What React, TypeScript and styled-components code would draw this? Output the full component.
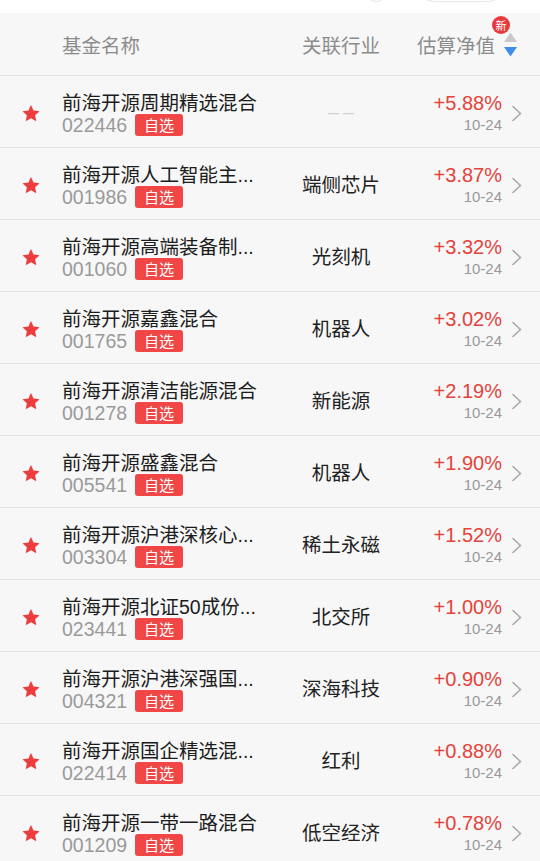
import React from "react";
import styled, { createGlobalStyle } from "styled-components";

const GlobalStyle = createGlobalStyle`
  html, body { margin: 0; padding: 0; }
  body {
    background: #f7f7f7;
    font-family: "Liberation Sans", "Noto Sans CJK SC", sans-serif;
    -webkit-font-smoothing: antialiased;
  }
`;

const Page = styled.div`
  width: 540px;
  min-height: 861px;
  background: #f7f7f7;
  overflow: hidden;
`;

const TopStrip = styled.div`
  height: 13px;
  background: #ffffff;
  overflow: hidden;
  display: flex;
  justify-content: flex-end;
  align-items: flex-end;
  padding-right: 33px;
`;

const GhostCircle = styled.div`
  width: 27px;
  height: 40px;
  border: 1px solid #e6e6e6;
  border-radius: 50%;
  margin-bottom: 11px;
  box-sizing: border-box;
`;

const GhostPill = styled.div`
  width: 92px;
  height: 40px;
  border: 1px solid #e6e6e6;
  border-radius: 20px;
  margin-left: 25px;
  margin-bottom: 11px;
  box-sizing: border-box;
`;

const columns = "62px 208px 142px 90px 38px";

const Header = styled.div`
  display: grid;
  grid-template-columns: ${columns};
  height: 62px;
  align-items: center;
  border-bottom: 1px solid #e6e6e6;
  color: #8c8c8c;
  font-size: 19.5px;
`;

const HeadName = styled.div`
  grid-column: 2;
  padding-top: 1px;
`;

const HeadIndustry = styled.div`
  grid-column: 3;
  text-align: center;
  padding-top: 1px;
`;

const HeadValue = styled.div`
  grid-column: 4 / span 2;
  position: relative;
  align-self: stretch;
  display: flex;
  justify-content: flex-end;
  align-items: center;
  padding-right: 23px;
  gap: 9px;
  padding-top: 1px;
`;

const NewBadge = styled.span`
  position: absolute;
  right: 30px;
  top: 3px;
  width: 18px;
  height: 18px;
  border-radius: 50%;
  background: #e8383d;
  color: #fff;
  font-size: 11px;
  line-height: 18px;
  text-align: center;
  font-family: "Noto Sans CJK SC", sans-serif;
`;

const SortIcon = styled.svg`
  width: 13px;
  height: 25px;
  display: block;
`;

const Row = styled.div`
  display: grid;
  grid-template-columns: ${columns};
  height: 71px;
  border-bottom: 1px solid #e6e6e6;
  align-items: center;
`;

const StarCell = styled.div`
  display: flex;
  justify-content: center;
  padding-top: 3px;
`;

const NameCell = styled.div`
  align-self: stretch;
  display: flex;
  flex-direction: column;
  padding-top: 15px;
  min-width: 0;
`;

const FundName = styled.div`
  font-size: 19.5px;
  line-height: 24px;
  color: #1c1c1c;
  white-space: nowrap;
`;

const CodeLine = styled.div`
  display: flex;
  align-items: center;
  gap: 8px;
  height: 22px;
  margin-top: -1px;
`;

const Code = styled.span`
  font-size: 19.5px;
  color: #9a9a9a;
  line-height: 22px;
`;

const Tag = styled.span`
  display: inline-block;
  height: 22px;
  line-height: 22px;
  padding: 0 9px;
  border-radius: 3px;
  background: #f04646;
  color: #ffffff;
  font-size: 15px;
  font-family: "Noto Sans CJK SC", sans-serif;
`;

const Industry = styled.div<{ $empty?: boolean }>`
  text-align: center;
  font-size: 19.5px;
  color: ${(p) => (p.$empty ? "#d0d0d0" : "#222222")};
  padding-top: ${(p) => (p.$empty ? "2px" : "0")};
  letter-spacing: ${(p) => (p.$empty ? "4px" : "0")};
  text-indent: ${(p) => (p.$empty ? "4px" : "0")};
`;

const ValueCell = styled.div`
  align-self: stretch;
  display: flex;
  flex-direction: column;
  align-items: flex-end;
  padding-top: 15px;
`;

const Change = styled.div`
  font-size: 20px;
  line-height: 24px;
  color: #e4433b;
`;

const DateText = styled.div`
  font-size: 15px;
  line-height: 18px;
  color: #999999;
  margin-top: 1px;
`;

const ChevronCell = styled.div`
  display: flex;
  padding-left: 9px;
  padding-top: 3px;
`;

const Star = () => (
  <svg width="20" height="19" viewBox="0 0 24 23" aria-hidden>
    <path
      d="M12 1.2l3.1 6.6 7.2.9-5.3 5 1.4 7.1L12 17.3l-6.4 3.5 1.4-7.1-5.3-5 7.2-.9z"
      fill="#f03c3c"
    />
  </svg>
);

const Chevron = () => (
  <svg width="12" height="17" viewBox="0 0 12 17" aria-hidden>
    <path d="M2 1.5l7.5 7-7.5 7" fill="none" stroke="#a8a8a8" strokeWidth="1.6" strokeLinecap="round" strokeLinejoin="round" />
  </svg>
);

type Fund = { name: string; code: string; industry: string; change: string };

const funds: Fund[] = [
  { name: "前海开源周期精选混合", code: "022446", industry: "", change: "+5.88%" },
  { name: "前海开源人工智能主...", code: "001986", industry: "端侧芯片", change: "+3.87%" },
  { name: "前海开源高端装备制...", code: "001060", industry: "光刻机", change: "+3.32%" },
  { name: "前海开源嘉鑫混合", code: "001765", industry: "机器人", change: "+3.02%" },
  { name: "前海开源清洁能源混合", code: "001278", industry: "新能源", change: "+2.19%" },
  { name: "前海开源盛鑫混合", code: "005541", industry: "机器人", change: "+1.90%" },
  { name: "前海开源沪港深核心...", code: "003304", industry: "稀土永磁", change: "+1.52%" },
  { name: "前海开源北证50成份...", code: "023441", industry: "北交所", change: "+1.00%" },
  { name: "前海开源沪港深强国...", code: "004321", industry: "深海科技", change: "+0.90%" },
  { name: "前海开源国企精选混...", code: "022414", industry: "红利", change: "+0.88%" },
  { name: "前海开源一带一路混合", code: "001209", industry: "低空经济", change: "+0.78%" },
];

export default function App() {
  return (
    <Page>
      <GlobalStyle />
      <TopStrip>
        <GhostCircle />
        <GhostPill />
      </TopStrip>
      <Header>
        <HeadName>基金名称</HeadName>
        <HeadIndustry>关联行业</HeadIndustry>
        <HeadValue>
          <NewBadge>新</NewBadge>
          <span>估算净值</span>
          <SortIcon viewBox="0 0 13 25" aria-hidden>
            <path d="M6.5 0.5L13 10H0z" fill="#c9c9c9" />
            <path d="M0 15H13L6.5 24.5z" fill="#3d8ee8" />
          </SortIcon>
        </HeadValue>
      </Header>
      {funds.map((f) => (
        <Row key={f.code}>
          <StarCell>
            <Star />
          </StarCell>
          <NameCell>
            <FundName>{f.name}</FundName>
            <CodeLine>
              <Code>{f.code}</Code>
              <Tag>自选</Tag>
            </CodeLine>
          </NameCell>
          <Industry $empty={!f.industry}>{f.industry || "––"}</Industry>
          <ValueCell>
            <Change>{f.change}</Change>
            <DateText>10-24</DateText>
          </ValueCell>
          <ChevronCell>
            <Chevron />
          </ChevronCell>
        </Row>
      ))}
    </Page>
  );
}
